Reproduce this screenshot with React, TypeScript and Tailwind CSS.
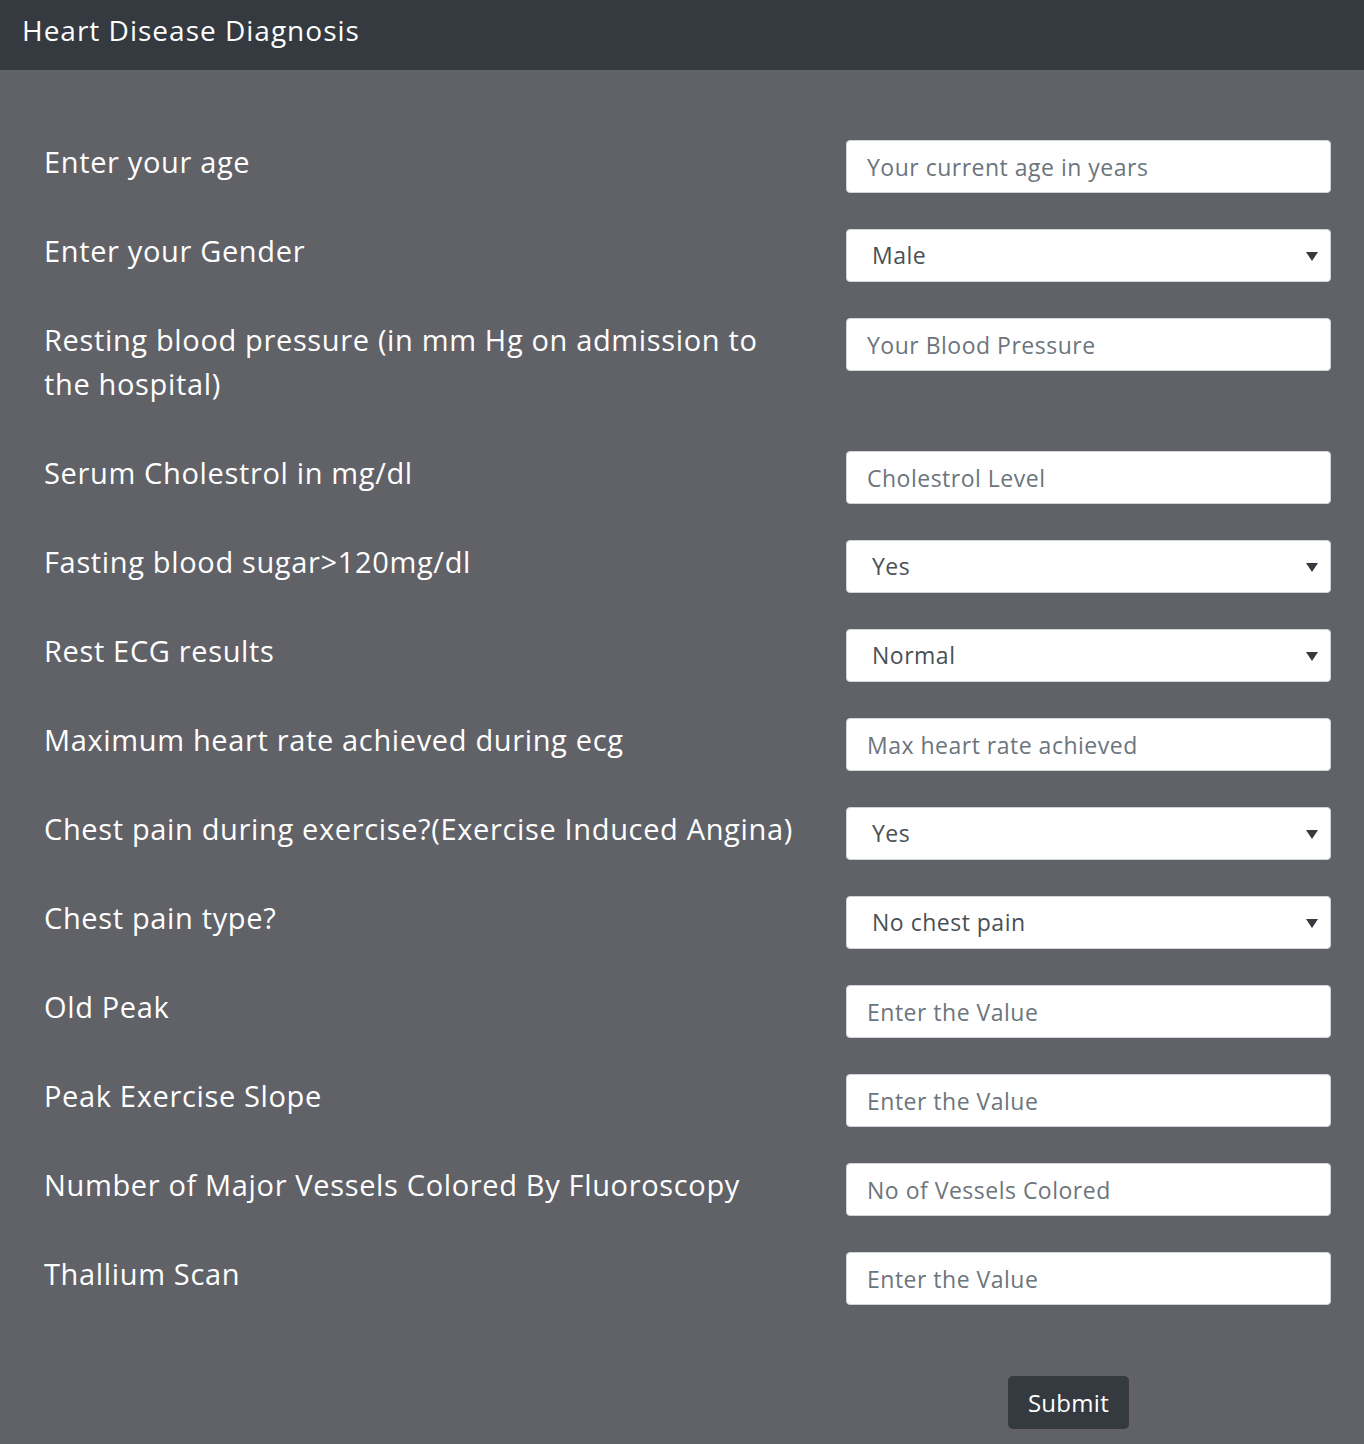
import React from "react";

type Row =
  | { label: string; kind: "input"; placeholder: string }
  | { label: string; kind: "select"; value: string; options: string[] };

const rows: Row[] = [
  { label: "Enter your age", kind: "input", placeholder: "Your current age in years" },
  { label: "Enter your Gender", kind: "select", value: "Male", options: ["Male", "Female"] },
  {
    label: "Resting blood pressure (in mm Hg on admission to the hospital)",
    kind: "input",
    placeholder: "Your Blood Pressure",
  },
  { label: "Serum Cholestrol in mg/dl", kind: "input", placeholder: "Cholestrol Level" },
  { label: "Fasting blood sugar>120mg/dl", kind: "select", value: "Yes", options: ["Yes", "No"] },
  { label: "Rest ECG results", kind: "select", value: "Normal", options: ["Normal", "Abnormal"] },
  { label: "Maximum heart rate achieved during ecg", kind: "input", placeholder: "Max heart rate achieved" },
  {
    label: "Chest pain during exercise?(Exercise Induced Angina)",
    kind: "select",
    value: "Yes",
    options: ["Yes", "No"],
  },
  { label: "Chest pain type?", kind: "select", value: "No chest pain", options: ["No chest pain"] },
  { label: "Old Peak", kind: "input", placeholder: "Enter the Value" },
  { label: "Peak Exercise Slope", kind: "input", placeholder: "Enter the Value" },
  { label: "Number of Major Vessels Colored By Fluoroscopy", kind: "input", placeholder: "No of Vessels Colored" },
  { label: "Thallium Scan", kind: "input", placeholder: "Enter the Value" },
];

const font = { fontFamily: '"Open Sans", "Noto Sans", sans-serif' };

export default function App() {
  return (
    <div className="min-h-[1444px] w-full bg-[#616268]" style={font}>
      <header className="h-[70px] bg-[#343a40] pl-[22px] flex items-start">
        <h1 className="text-white text-[28px] leading-[60px] font-normal tracking-[1px]">Heart Disease Diagnosis</h1>
      </header>
      <main className="pl-[44px] pr-[33px] pt-[70px] pb-[14px]">
        {rows.map((r, i) => (
          <div key={i} className="flex items-start gap-[46px]">
            <label className="w-[756px] text-white text-[29px] leading-[44px] pb-[45px] tracking-[0.65px]">
              {r.label}
            </label>
            {r.kind === "input" ? (
              <input
                className="w-[485px] h-[53px] bg-white border border-[#ced4da] rounded-[4px] pl-[20px] text-[23px] text-[#495057] placeholder:text-[#6c757d] outline-none tracking-[0.5px]"
                placeholder={r.placeholder}
              />
            ) : (
              <div className="relative w-[485px] h-[53px]">
                <select
                  defaultValue={r.value}
                  className="appearance-none w-full h-full bg-white border border-[#ced4da] rounded-[4px] pl-[25px] text-[23px] text-[#495057] outline-none tracking-[0.5px]"
                >
                  {r.options.map((o) => (
                    <option key={o}>{o}</option>
                  ))}
                </select>
                <svg
                  className="absolute right-[13px] top-[23px] pointer-events-none"
                  width="12"
                  height="9"
                  viewBox="0 0 12 9"
                >
                  <path d="M0 0 L12 0 L6 9 Z" fill="#343a40" />
                </svg>
              </div>
            )}
          </div>
        ))}
        <div className="flex">
          <div className="w-[802px]" />
          <button className="ml-[162px] mt-[35px] h-[53px] w-[121px] bg-[#343a40] text-white text-[24px] rounded-[5px] tracking-[0.3px]">
            Submit
          </button>
        </div>
      </main>
    </div>
  );
}
